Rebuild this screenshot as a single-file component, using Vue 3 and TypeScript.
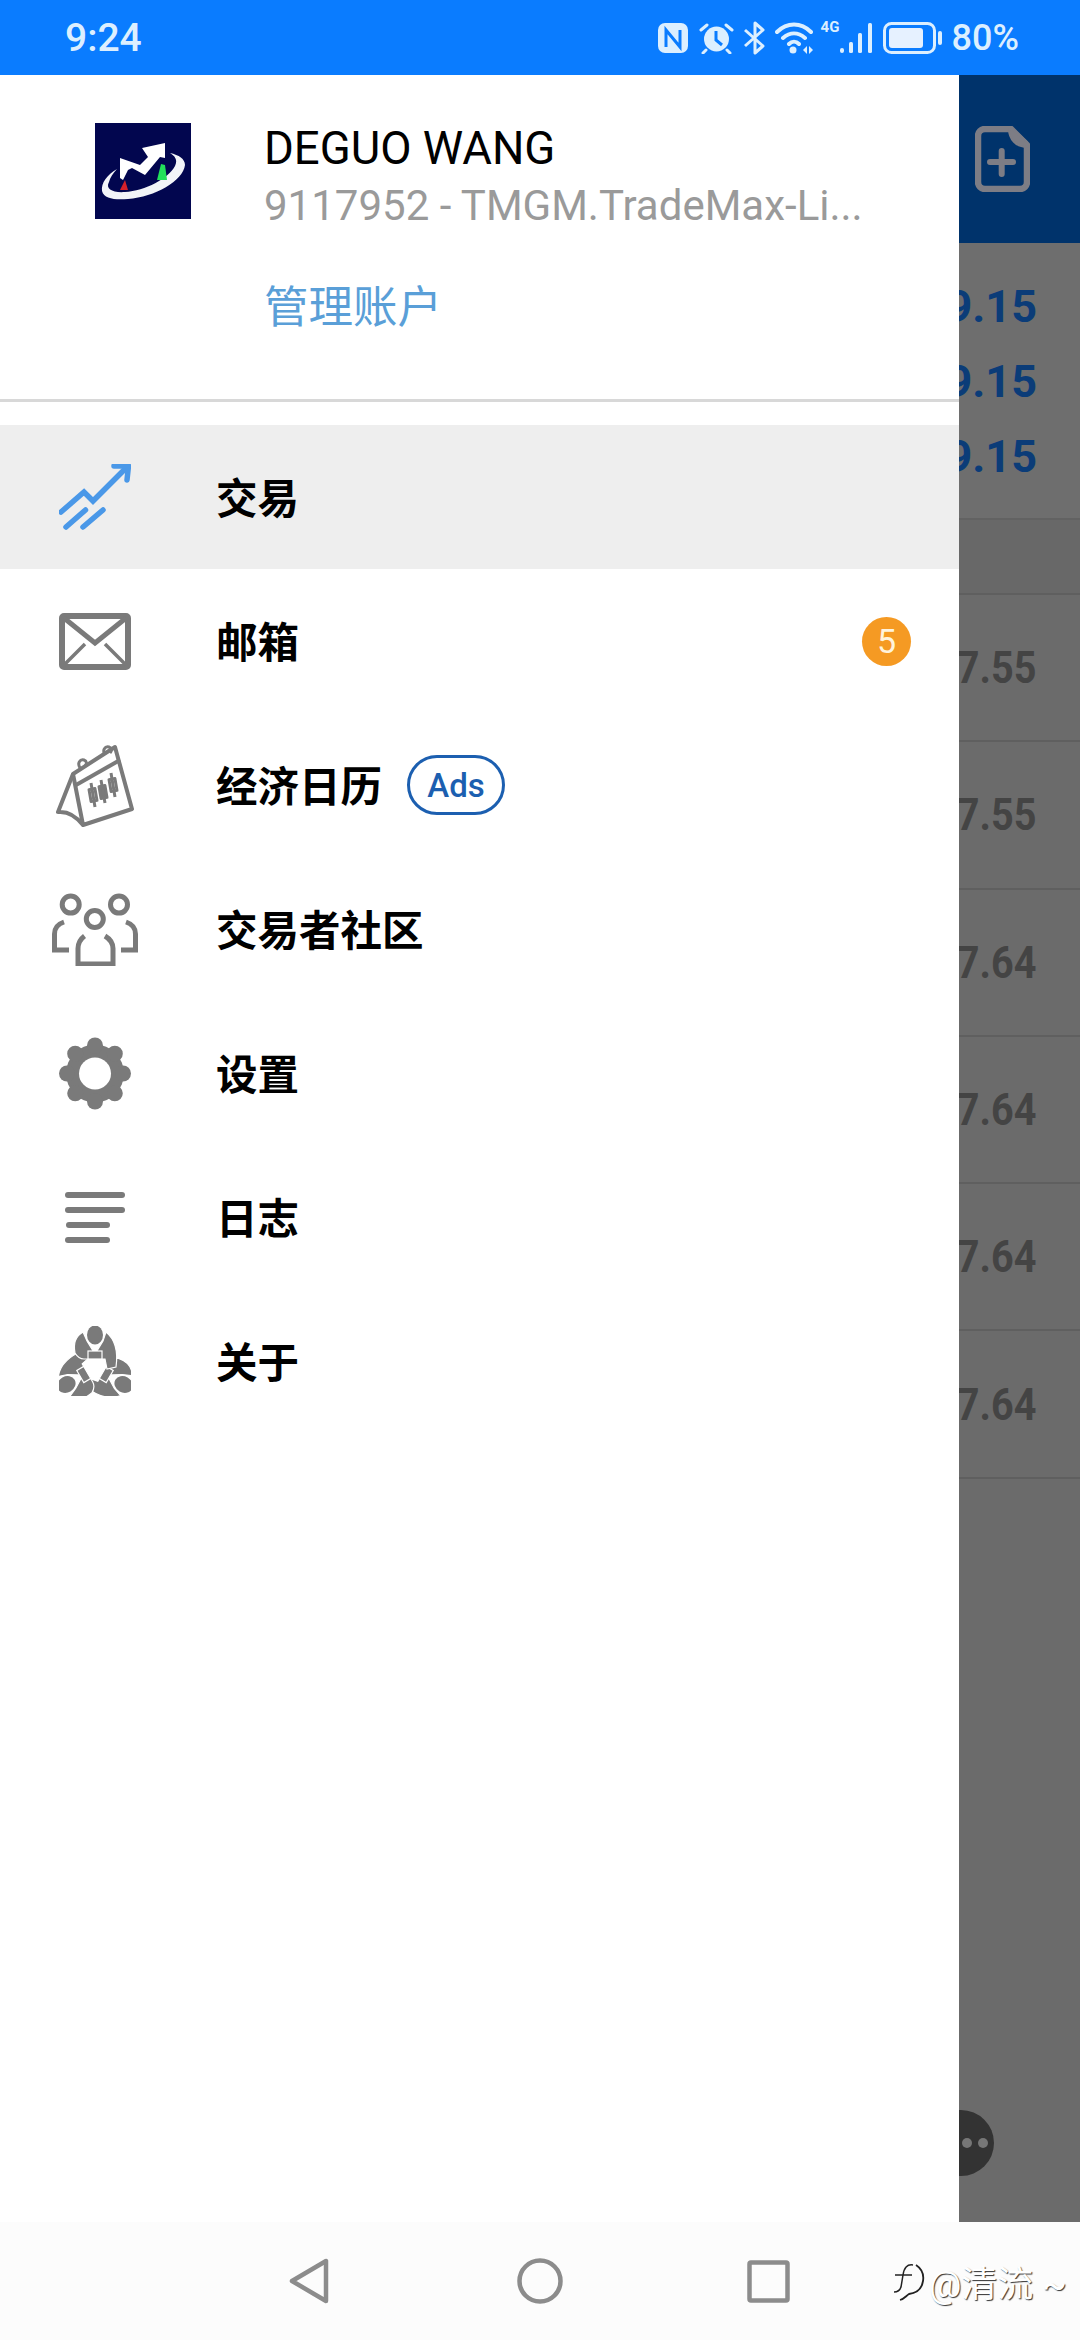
<script setup lang="ts">
interface MenuItem {
  key: string
  label: string
  badge?: number
  ads?: boolean
  active?: boolean
}

const menuItems: MenuItem[] = [
  { key: 'trade', label: '交易', active: true },
  { key: 'mail', label: '邮箱', badge: 5 },
  { key: 'calendar', label: '经济日历', ads: true },
  { key: 'community', label: '交易者社区' },
  { key: 'settings', label: '设置' },
  { key: 'journal', label: '日志' },
  { key: 'about', label: '关于' }
]

// Price column behind the drawer
const upperPrices = ['9.15', '9.15', '9.15']
const lowerPrices = ['7.55', '7.55', '7.64', '7.64', '7.64', '7.64']
const gearAngles = [0, 45, 90, 135, 180, 225, 270, 315]
const figureAngles = [120, 240, 0]
</script>

<template>
  <div class="screen">
    <header class="status-bar">
      <span class="time">9:24</span>
      <div class="status-icons">
        <svg width="32" height="32" viewBox="0 0 32 32">
          <rect x="0" y="1" width="30" height="30" rx="7" fill="#dcefff" />
          <path d="M8 25V8l14 17V8" fill="none" stroke="#0a7cff" stroke-width="3" />
        </svg>
        <svg width="35" height="32" viewBox="0 0 35 32">
          <circle cx="17.500" cy="17" r="12.500" fill="#dcefff" />
          <path d="M17 9v9l6 5" fill="none" stroke="#0a7cff" stroke-width="3" />
          <path d="M2 8l6-5M33 8l-6-5M7 28l-3 3M28 28l3 3" fill="none" stroke="#dcefff" stroke-width="3" stroke-linecap="round" />
        </svg>
        <svg width="23" height="36" viewBox="0 0 23 36">
          <path d="M2 10l18 16-8 7V3l8 7L2 26" fill="none" stroke="#dcefff" stroke-width="3" stroke-linejoin="round" />
        </svg>
        <svg width="38" height="32" viewBox="0 0 38 32">
          <path d="M2 10C12 0 26 0 36 10M8 16c7-6 15-6 22 0M14 22c3-3 7-3 10 0" fill="none" stroke="#dcefff" stroke-width="4" stroke-linecap="round" />
          <circle cx="18" cy="28" r="3.500" fill="#dcefff" />
          <path d="M28 28l4-4v8zM38 28l-4-4v8z" fill="#dcefff" />
        </svg>
        <div class="network">
          <span class="net-type">4G</span>
          <svg width="34" height="32" viewBox="0 0 34 32">
            <rect x="0" y="26" width="4" height="5" rx="2" fill="#dcefff" />
            <rect x="9" y="20" width="4" height="11" rx="1.500" fill="#dcefff" />
            <rect x="18" y="11" width="4" height="20" rx="1.500" fill="#dcefff" />
            <rect x="28" y="1" width="4" height="30" rx="1.500" fill="#dcefff" />
          </svg>
        </div>
        <svg width="60" height="32" viewBox="0 0 60 32">
          <rect x="1.500" y="1.500" width="50" height="29" rx="7" fill="none" stroke="#dcefff" stroke-width="3" />
          <rect x="6" y="6" width="34" height="20" rx="3" fill="#e6f1ff" />
          <rect x="55" y="9" width="4" height="14" rx="2" fill="#dcefff" />
        </svg>
        <span class="battery-text">80%</span>
      </div>
    </header>

    <div class="main">
      <aside class="drawer">
        <section class="account">
          <svg class="logo" width="96" height="96" viewBox="0 0 96 96">
            <rect width="96" height="96" fill="#02064f" />
            <path d="M22 46C12 52 6 60 7 68c2 8 13 9 26 8 27-2 55-18 57-34 0-6-6-10-15-12 5 3 8 7 5 13-6 12-30 25-50 26-12 1-20-3-16-10 1-4 4-9 8-13z" fill="#f2f4f8" />
            <path d="M25 55V35l20 7 8-8-6-9 23-5v15l-5-1-15 18-13-7-4 2-5 10z" fill="#fff" />
            <path d="M25 67l5-10 3 10z" fill="#d4202a" />
            <path d="M62 57l4-16 4 1 2 15z" fill="#22e05a" />
          </svg>
          <div class="account-info">
            <div class="account-name">DEGUO WANG</div>
            <div class="account-server">9117952 - TMGM.TradeMax-Li...</div>
            <a class="account-manage">管理账户</a>
          </div>
        </section>

        <nav class="menu">
          <div
            v-for="item in menuItems"
            :key="item.key"
            class="menu-item"
            :class="{ active: item.active }"
          >
            <div class="menu-icon">
              <svg v-if="item.key === 'trade'" width="72" height="66" viewBox="0 0 72 66" fill="none" stroke="#4a98e8" stroke-width="5.500" stroke-linecap="round">
                <path d="M2 48l23-20 9 9L67 4" />
                <path d="M55 2h14.500L68 16" stroke-linejoin="round" />
                <path d="M7 63l19.500-17M24 63l20-17" />
              </svg>

              <svg v-else-if="item.key === 'mail'" width="72" height="57" viewBox="0 0 72 57" fill="none" stroke="#7a7a7a">
                <rect x="3" y="3" width="66" height="51" rx="2" stroke-width="6" />
                <path d="M5 5l31 25L67 5" stroke-width="5" />
                <path d="M5 52l21-21M67 52L46 31" stroke-width="3.500" />
              </svg>

              <svg v-else-if="item.key === 'calendar'" width="78" height="84" viewBox="0 0 78 84" fill="none" stroke="#7a7a7a" stroke-linejoin="round">
                <path d="M17 31L59 4l17 62-49 16z" stroke-width="4" />
                <path d="M17 31L2 69c10-1 18 4 25 13" stroke-width="4" />
                <path d="M20 42l44-25" stroke-width="4" />
                <path d="M24 25c-3-5 0-9 4-8 3 1 3 4 1 6M49 12c-3-5 0-9 4-8 3 1 3 4 1 6" stroke-width="3" />
                <g stroke-width="3">
                  <path d="M35 40l4 24M45 37l4 23M55 30l4 24" />
                  <rect x="34" y="46" width="6" height="12" transform="rotate(-10 37 52)" />
                  <rect x="44" y="43" width="6" height="12" fill="#7a7a7a" transform="rotate(-10 47 49)" />
                  <rect x="54" y="36" width="6" height="12" transform="rotate(-10 57 42)" />
                </g>
              </svg>

              <svg v-else-if="item.key === 'community'" width="87" height="73" viewBox="0 0 87 73" fill="none" stroke="#7a7a7a" stroke-width="5">
                <circle cx="18.700" cy="11.600" r="8.500" />
                <circle cx="67" cy="11.600" r="8.500" />
                <circle cx="42.800" cy="26" r="8.500" />
                <path d="M12 29C6 31 2.500 35 2.500 41v16H17" />
                <path d="M74 29c6 2 9.500 6 9.500 12v16H69" />
                <path d="M32.500 43c-4 3-6.500 7-6.500 12.600v15.400h35V55.600c0-5.600-3-9.600-8-12.600" />
              </svg>

              <svg v-else-if="item.key === 'settings'" width="72" height="73" viewBox="0 0 72 72">
                <circle cx="36" cy="36" r="29" fill="#7a7a7a" />
                <circle
                  v-for="angle in gearAngles"
                  :key="angle"
                  cx="36"
                  cy="8"
                  r="8"
                  fill="#7a7a7a"
                  :transform="`rotate(${angle} 36 36)`"
                />
                <circle cx="36" cy="36" r="16" fill="#fff" />
              </svg>

              <svg v-else-if="item.key === 'journal'" width="60" height="51" viewBox="0 0 60 51" fill="#7a7a7a">
                <rect x="0" y="0" width="60" height="6" rx="3" />
                <rect x="0" y="15" width="60" height="6" rx="3" />
                <rect x="1" y="30" width="44" height="6" rx="3" />
                <rect x="0" y="45" width="45" height="6" rx="3" />
              </svg>

              <svg v-else width="72" height="70" viewBox="0 0 72 70">
                <g
                  v-for="angle in figureAngles"
                  :key="angle"
                  :transform="`rotate(${angle} 36 42)`"
                >
                  <path d="M24 6C17 10 14 17 16 27c3 5 6 6 9 6h21l2 10 9-2c2-14 0-27-10-35l-3 9-8 13-8-13z" fill="#7a7a7a" stroke="#fff" stroke-width="1.200" />
                  <ellipse cx="36" cy="9" rx="8" ry="9.500" fill="#7a7a7a" />
                  <rect x="29" y="25" width="14" height="8" fill="#7a7a7a" stroke="#fff" stroke-width="1.200" />
                </g>
              </svg>
            </div>
            <span class="menu-label">{{ item.label }}</span>
            <span v-if="item.ads" class="ads-tag">Ads</span>
            <span v-if="item.badge" class="badge">{{ item.badge }}</span>
          </div>
        </nav>
      </aside>

      <div class="behind">
        <div class="behind-header">
          <svg width="55" height="66" viewBox="0 0 55 66" fill="none" stroke="#7d7d85" stroke-width="6.500" stroke-linejoin="round">
            <path d="M10 3h26l16 16v37a7 7 0 0 1-7 7H10a7 7 0 0 1-7-7V10a7 7 0 0 1 7-7z" />
            <path d="M34 3c0 10 7 18 18 18V16L38 3z" fill="#7d7d85" stroke-width="2" />
            <path d="M26.700 25v23M15 36h23" stroke-width="6" stroke-linecap="round" />
          </svg>
        </div>
        <div class="quote-group">
          <div v-for="(price, i) in upperPrices" :key="i" class="quote-line">
            <span class="price price-blue">{{ price }}</span>
          </div>
        </div>
        <div class="empty-row"></div>
        <div v-for="(price, i) in lowerPrices" :key="i" class="price-row">
          <span class="price price-dark">{{ price }}</span>
        </div>
        <div class="fab"><i></i><i></i></div>
      </div>
    </div>

    <footer class="nav-bar">
      <svg width="44" height="46" viewBox="0 0 44 46" fill="none" stroke="#8c8c8c" stroke-width="4.500" stroke-linejoin="round">
        <path d="M37 3v40L3 23z" />
      </svg>
      <svg width="46" height="46" viewBox="0 0 46 46" fill="none" stroke="#8c8c8c" stroke-width="4.500">
        <circle cx="23" cy="23" r="20.500" />
      </svg>
      <svg width="43" height="43" viewBox="0 0 43 43" fill="none" stroke="#8c8c8c" stroke-width="4.500" stroke-linejoin="round">
        <rect x="2.500" y="2.500" width="38" height="38" rx="1.500" />
      </svg>
      <div class="watermark">
        <svg width="36" height="40" viewBox="0 0 36 40" fill="none" stroke="#222" stroke-width="1.800">
          <path d="M27 4c6 4 8 10 7 16-1 7-6 12-14 13-3 2-5 5-9 6" />
          <path d="M24 4c-6-1-9 3-10 10l-2 12c-1 3-3 5-7 5M6 14h17" stroke-width="1.500" />
        </svg>
        <span class="watermark-text">@清流 ~</span>
      </div>
    </footer>
  </div>
</template>

<style scoped>
.screen {
  width: 1080px;
  height: 2340px;
  display: flex;
  flex-direction: column;
  overflow: hidden;
  background: #fff;
  font-family: Roboto, "Noto Sans CJK SC", sans-serif;
}

/* Status bar */
.status-bar {
  height: 75px;
  flex: none;
  display: flex;
  align-items: center;
  justify-content: space-between;
  padding: 0 61px 0 65px;
  background: #0a7cff;
  color: #dcefff;
}

.time {
  font-size: 39px;
  font-weight: 500;
}

.status-icons {
  display: flex;
  align-items: center;
  gap: 9px;
}

.network {
  position: relative;
  width: 52px;
  height: 32px;
  display: flex;
  justify-content: flex-end;
}

.net-type {
  position: absolute;
  left: -1px;
  top: -4px;
  font-size: 15px;
  font-weight: 700;
  color: #dcefff;
}

.battery-text {
  font-size: 36px;
  font-weight: 500;
}

/* Drawer */
.main {
  height: 2147px;
  flex: none;
  display: flex;
}

.drawer {
  width: 959px;
  flex: none;
  background: #fff;
}

.account {
  height: 327px;
  padding: 48px 0 0 95px;
  box-sizing: border-box;
  display: flex;
  align-items: flex-start;
  border-bottom: 3px solid #d8d8d8;
}

.logo {
  flex: none;
}

.account-info {
  margin-left: 73px;
}

.account-name {
  font-size: 45.500px;
  line-height: 54px;
  margin-top: -1px;
  color: #000;
}

.account-server {
  font-size: 42px;
  line-height: 54px;
  margin-top: 3px;
  color: #9a9a9a;
  white-space: nowrap;
}

.account-manage {
  display: block;
  margin-top: 45px;
  font-size: 44.500px;
  line-height: 60px;
  color: #5a9fd8;
}

.menu {
  margin-top: 23px;
}

.menu-item {
  height: 144px;
  display: flex;
  align-items: center;
  padding-right: 48px;
}

.menu-item.active {
  background: #eeeeee;
}

.menu-icon {
  width: 190px;
  margin-right: 26px;
  flex: none;
  display: flex;
  justify-content: center;
}

.menu-label {
  font-size: 41.500px;
  font-weight: 700;
  line-height: 50px;
  color: #000;
  position: relative;
  top: 3px;
}

.ads-tag {
  width: 98px;
  height: 60px;
  margin-left: 25px;
  box-sizing: border-box;
  display: flex;
  align-items: center;
  justify-content: center;
  border: 3px solid #1c5fb0;
  border-radius: 30px;
  font-size: 33px;
  font-weight: 500;
  color: #1c5fb0;
}

.badge {
  width: 49px;
  height: 49px;
  margin-left: auto;
  display: flex;
  align-items: center;
  justify-content: center;
  border-radius: 50%;
  background: #f59a23;
  font-size: 34px;
  color: #fff3dc;
}

/* Dimmed page behind the drawer */
.behind {
  position: relative;
  flex: 1;
  min-width: 0;
  overflow: hidden;
  background: #6b6b6b;
}

.behind-header {
  height: 168px;
  display: flex;
  align-items: center;
  padding: 0 0 0 16px;
  box-sizing: border-box;
  background: #00336b;
}

.quote-group {
  height: 277px;
  padding-top: 26px;
  box-sizing: border-box;
  background: #6e6e6e;
  border-bottom: 2px solid #626262;
}

.quote-line {
  height: 75px;
  display: flex;
  align-items: center;
  justify-content: flex-end;
  padding-right: 43px;
}

.price {
  flex: none;
  white-space: nowrap;
  font-size: 45px;
  font-weight: 700;
}

.price-blue {
  color: #0b3c78;
}

.empty-row {
  height: 75px;
  box-sizing: border-box;
  border-bottom: 2px solid #5f5f5f;
  background: #686868;
}

.price-row {
  height: 147.300px;
  box-sizing: border-box;
  display: flex;
  align-items: center;
  justify-content: flex-end;
  padding-right: 43px;
  border-bottom: 2px solid #5f5f5f;
}

.price-dark {
  color: #444;
  transform: scaleX(0.88);
  transform-origin: right center;
}

.fab {
  position: absolute;
  left: -31px;
  top: 2035px;
  width: 66px;
  height: 66px;
  border-radius: 50%;
  background: #333;
  display: flex;
  align-items: center;
  justify-content: center;
  padding-left: 28px;
  box-sizing: border-box;
  gap: 6px;
}

.fab i {
  width: 10px;
  height: 10px;
  border-radius: 50%;
  background: #777;
}

/* Navigation bar */
.nav-bar {
  flex: 1;
  display: flex;
  align-items: center;
  padding: 0 0 0 289px;
  background: #fcfcfc;
  gap: 184px;
}

.watermark {
  display: flex;
  align-items: center;
  gap: 4px;
  margin-left: -85px;
}

.watermark-text {
  font-size: 36px;
  color: #fff;
  text-shadow: 1px 1px 1px rgba(0, 0, 0, 0.8);
  white-space: nowrap;
}
</style>
